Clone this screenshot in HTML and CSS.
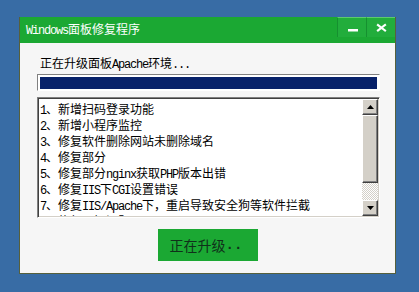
FILE: index.html
```html
<!DOCTYPE html>
<html>
<head>
<meta charset="utf-8">
<link rel="stylesheet" href="styles.css">
</head>
<body>
<div class="window">
  <div class="titlebar">
    <span class="title"><span class="en">Windows</span>面板修复程序</span>
    <div class="ctrls">
      <div class="tbtn"><svg width="28" height="19" viewBox="0 0 28 19"><rect x="10" y="11" width="10" height="2.5" fill="#fff"/></svg></div>
      <div class="tbtn"><svg width="28" height="19" viewBox="0 0 28 19"><path d="M11 7 L18 12.5 M18 7 L11 12.5" stroke="#fff" stroke-width="2.2" stroke-linecap="square"/></svg></div>
    </div>
  </div>
  <div class="client">
    <div class="label">正在升级面板<span class="en">Apache</span>环境<span class="en">...</span></div>
    <div class="progress"><div class="fill"></div></div>
    <div class="list">
      <div class="items">
        <div class="item"><span class="en">1</span>、新增扫码登录功能</div>
        <div class="item"><span class="en">2</span>、新增小程序监控</div>
        <div class="item"><span class="en">3</span>、修复软件删除网站未删除域名</div>
        <div class="item"><span class="en">4</span>、修复部分</div>
        <div class="item"><span class="en">5</span>、修复部分<span class="en">nginx</span>获取<span class="en">PHP</span>版本出错</div>
        <div class="item"><span class="en">6</span>、修复<span class="en">IIS</span>下<span class="en">CGI</span>设置错误</div>
        <div class="item"><span class="en">7</span>、修复<span class="en">IIS/Apache</span>下，重启导致安全狗等软件拦截</div>
        <div class="item"><span class="en">8</span>、修复已知问题</div>
      </div>
      <div class="scrollbar">
        <div class="sbtn"><svg width="7" height="4" viewBox="0 0 7 4"><path d="M3.5 0 L7 4 L0 4 Z" fill="#000"/></svg></div>
        <div class="thumb"></div>
        <div class="track"></div>
        <div class="sbtn"><svg width="7" height="4" viewBox="0 0 7 4"><path d="M0 0 L7 0 L3.5 4 Z" fill="#000"/></svg></div>
      </div>
    </div>
    <div class="actions"><div class="go">正在升级<span class="dots">..</span></div></div>
  </div>
</div>
</body>
</html>
```
FILE: styles.css
```css
html, body {
  margin: 0;
  padding: 0;
}
body {
  background: #386ca5;
  width: 419px;
  height: 292px;
  overflow: hidden;
  padding: 17px 0 0 19px;
  box-sizing: border-box;
  font-family: "Noto Sans CJK SC", sans-serif;
  font-size: 12px;
  color: #000;
}
.en {
  font-family: "Liberation Mono", monospace;
  letter-spacing: -1.2px;
}
.window {
  width: 377px;
  height: 257px;
  box-sizing: border-box;
  border: 1px solid #56603c;
  border-top: none;
  background: #f6f6f6;
  display: flex;
  flex-direction: column;
}
.titlebar {
  height: 26px;
  background: #1ba833;
  display: flex;
  align-items: center;
  justify-content: space-between;
}
.title {
  color: #fff;
  padding-left: 6px;
  line-height: 14px;
  font-size: 12px;
}
.ctrls {
  align-self: flex-start;
  display: flex;
}
.tbtn {
  width: 28px;
  height: 19px;
  background: #22ad3c;
  border-top: 1px solid #5ccb6c;
  border-left: 1px solid #169030;
  display: flex;
}
.client {
  flex: 1;
  display: flex;
  flex-direction: column;
  padding: 0 15px 0 17px;
}
.label {
  margin-top: 13px;
  height: 14px;
  line-height: 14px;
  padding-left: 3px;
}
.progress {
  margin-top: 4px;
  height: 17px;
  box-sizing: border-box;
  border-top: 1px solid #808080;
  border-left: 1px solid #808080;
  border-right: 1px solid #fff;
  border-bottom: 1px solid #fff;
  padding: 2px 2px 1px 2px;
  background: #fff;
}
.fill {
  height: 100%;
  background: #08226a;
}
.list {
  margin-top: 6px;
  height: 121px;
  box-sizing: border-box;
  border-top: 1px solid #808080;
  border-left: 1px solid #808080;
  border-right: 1px solid #fff;
  border-bottom: 1px solid #fff;
  box-shadow: inset 1px 1px 0 #404040, inset -1px -1px 0 #d4d0c8;
  padding: 1px;
  background: #fff;
  display: flex;
  overflow: hidden;
}
.items {
  flex: 1;
  padding: 2px 0 0 1px;
  overflow: hidden;
}
.item {
  height: 16px;
  line-height: 16px;
  white-space: nowrap;
}
.scrollbar {
  width: 16px;
  display: flex;
  flex-direction: column;
}
.sbtn, .thumb {
  box-sizing: border-box;
  background: #d4d0c8;
  border-top: 1px solid #fff;
  border-left: 1px solid #fff;
  border-right: 1px solid #404040;
  border-bottom: 1px solid #404040;
  box-shadow: inset -1px -1px 0 #808080;
}
.sbtn {
  height: 16px;
  display: flex;
  align-items: center;
  justify-content: center;
}
.thumb {
  height: 68px;
}
.track {
  flex: 1;
  background-color: #fff;
  background-image: repeating-conic-gradient(#d4d0c8 0 25%, #fff 0 50%);
  background-size: 2px 2px;
}
.actions {
  margin-top: 11px;
  display: flex;
  justify-content: center;
  padding-right: 1px;
}
.go {
  width: 100px;
  height: 32px;
  background: #1ba833;
  color: #10301a;
  font-size: 14px;
  display: flex;
  align-items: center;
  justify-content: center;
  padding-right: 4px;
  box-sizing: border-box;
}
.dots {
  font-family: "Liberation Mono", monospace;
  font-weight: bold;
  letter-spacing: 0;
}
```
